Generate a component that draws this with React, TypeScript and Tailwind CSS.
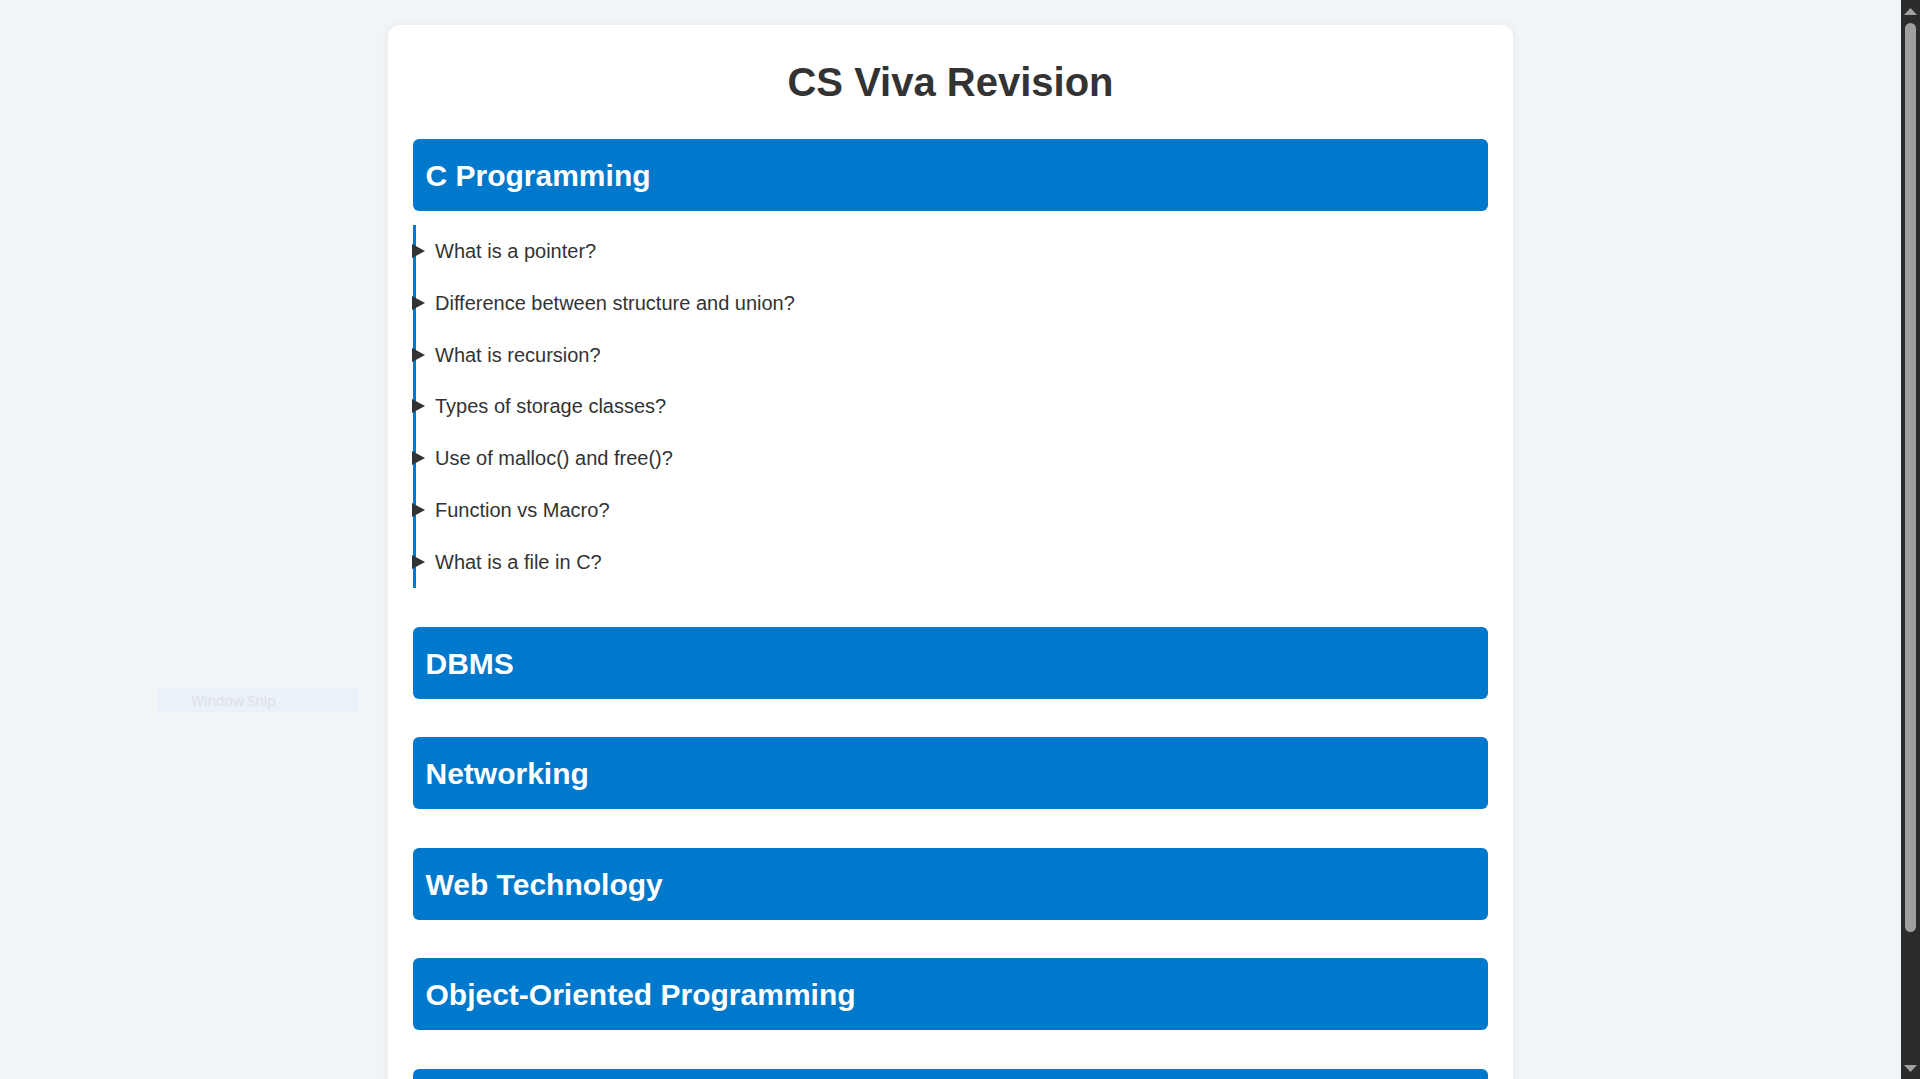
import React from "react";

const cQuestions = [
  "What is a pointer?",
  "Difference between structure and union?",
  "What is recursion?",
  "Types of storage classes?",
  "Use of malloc() and free()?",
  "Function vs Macro?",
  "What is a file in C?",
];

const sections = [
  "DBMS",
  "Networking",
  "Web Technology",
  "Object-Oriented Programming",
  "Operating Systems",
];

function Header({ title }: { title: string }) {
  return (
    <div className="h-[72px] shrink-0 bg-[#0078cc] rounded-[6px] px-[12.5px] pt-[2px] flex items-center">
      <h2 className="text-white text-[30px] font-bold leading-none">{title}</h2>
    </div>
  );
}

export default function App() {
  return (
    <div className="relative flex h-[1079px] w-full overflow-hidden bg-[#f2f5f7] font-['Liberation_Sans',Arial,sans-serif] text-[#333]">
      <main className="flex-1 overflow-hidden">
        <div className="mx-auto mt-[25px] w-[1125px] bg-white rounded-[12px] shadow-[0_0_10px_rgba(0,0,0,0.06)] p-[25px]">
          <h1 className="mt-[9px] mb-[34px] text-center text-[40px] leading-[46px] font-bold text-[#333]">
            CS Viva Revision
          </h1>
          <div className="flex flex-col gap-[38.6px]">
            <section className="flex flex-col">
              <Header title="C Programming" />
              <div className="mt-[14px] border-l-[3px] border-[#0078cc] flex flex-col">
                {cQuestions.map((q) => (
                  <div key={q} className="h-[51.857px] flex items-center">
                    <svg width="13" height="14" viewBox="0 0 13 14" className="ml-[-4px] shrink-0">
                      <polygon points="0,0 13,7 0,14" fill="#333" />
                    </svg>
                    <span className="ml-[10px] text-[20px] text-[#333]">{q}</span>
                  </div>
                ))}
              </div>
            </section>
            {sections.map((s) => (
              <section key={s} className="flex flex-col">
                <Header title={s} />
              </section>
            ))}
          </div>
        </div>
      </main>
      <div className="w-[19px] shrink-0 bg-[#2b2b2b] flex flex-col items-center">
        <div className="h-[23px] pt-[8px] flex justify-center">
          <svg width="13" height="7" viewBox="0 0 13 7">
            <polygon points="6.5,0 13,7 0,7" fill="#a0a0a0" />
          </svg>
        </div>
        <div className="w-[11px] h-[909px] rounded-full bg-[#9f9f9f]" />
        <div className="flex-1" />
        <div className="h-[14px] flex justify-center">
          <svg width="13" height="7" viewBox="0 0 13 7">
            <polygon points="0,0 13,0 6.5,7" fill="#a0a0a0" />
          </svg>
        </div>
      </div>
      <div className="absolute left-[157px] top-[688px] w-[202px] h-[24px] bg-[#eaf1f8] flex items-center pl-[34px]">
        <span className="text-[14px] text-[#dde0e3] font-['Open_Sans',sans-serif]">Window Snip</span>
      </div>
    </div>
  );
}
